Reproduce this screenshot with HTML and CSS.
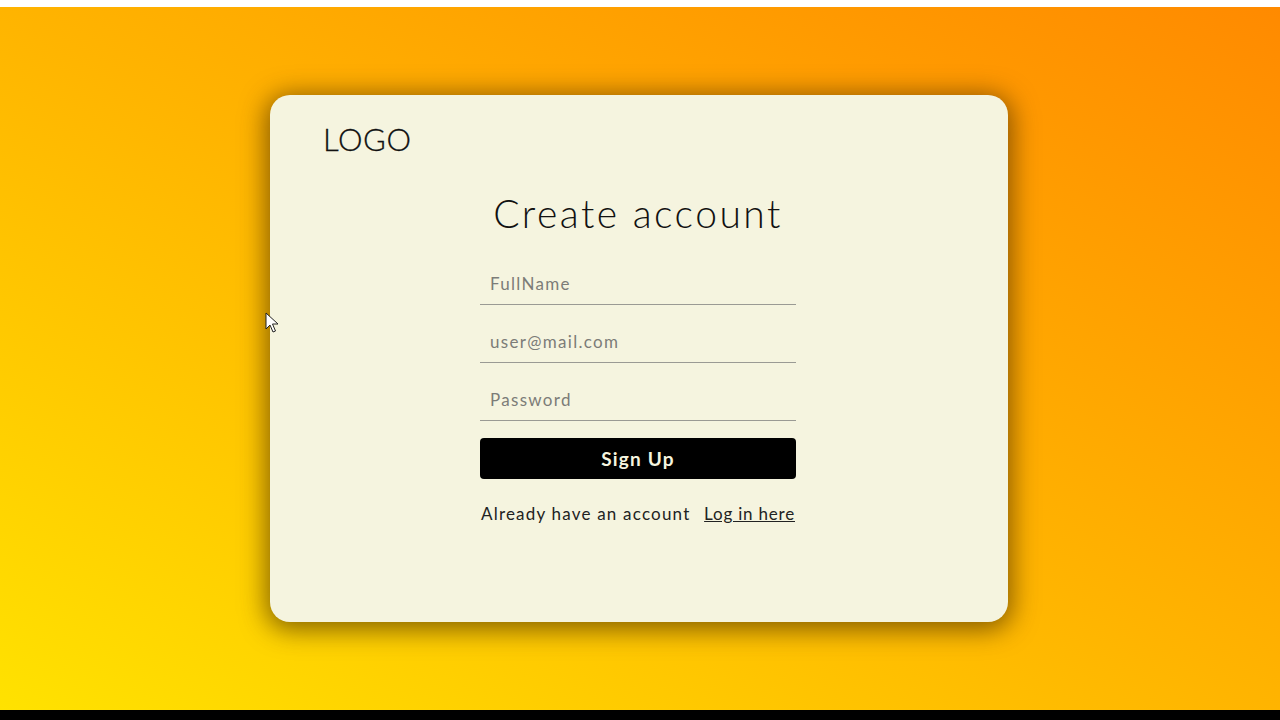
FILE: index.html
```html
<!DOCTYPE html>
<html lang="en">
<head>
<meta charset="utf-8">
<title>Create account</title>
<link rel="stylesheet" href="styles.css">
</head>
<body>
<div class="top-strip"></div>
<main class="stage">
  <section class="card">
    <div class="logo">LOGO</div>
    <form class="form">
      <h1 class="title">Create account</h1>
      <input class="field" type="text" placeholder="FullName">
      <input class="field" type="email" placeholder="user@mail.com">
      <input class="field" type="password" placeholder="Password">
      <button class="btn" type="button">Sign Up</button>
      <p class="alt"><span>Already have an account</span><a href="#" class="link">Log in here</a></p>
    </form>
  </section>
  <svg class="cursor" width="14" height="22" viewBox="0 0 14 22"><path d="M1 1 L1 17 L5 13 L8 20 L10.5 19 L7.5 12 L13 12 Z" fill="#fff" stroke="#222" stroke-width="1"/></svg>
</main>
<div class="bottom-strip"></div>
</body>
</html>
```
FILE: styles.css
```css
html, body { margin: 0; padding: 0; }
body {
  width: 1280px;
  height: 720px;
  overflow: hidden;
  font-family: "Lato", "Open Sans", sans-serif;
}
.top-strip { height: 7px; background: #ffffff; }
.bottom-strip { height: 10px; background: #000000; }
.stage {
  position: relative;
  height: 703px;
  display: flex;
  align-items: center;
  justify-content: center;
  background: linear-gradient(to top right, #ffe200 0%, #ffb400 50%, #ff8a00 100%);
}
.card {
  box-sizing: border-box;
  width: 738px;
  height: 527px;
  margin-left: -2px;
  border-radius: 20px;
  background: #f5f4df;
  box-shadow: 0 4px 26px 4px rgba(70, 45, 0, 0.65);
  padding: 22px 53px 0;
  display: flex;
  flex-direction: column;
}
.logo {
  font-size: 31px;
  line-height: 44px;
  font-weight: 300;
  color: #111;
  letter-spacing: 0.6px;
  -webkit-text-stroke: 0.3px #111;
}
.form {
  width: 316px;
  align-self: center;
  margin-left: -2px;
  display: flex;
  flex-direction: column;
}
.title {
  margin: 28px 0 26px;
  font-size: 39px;
  line-height: 48px;
  font-weight: 300;
  text-align: center;
  color: #111;
  letter-spacing: 2.5px;
}
.field {
  box-sizing: border-box;
  height: 42px;
  margin: 0 0 16px;
  padding: 0 10px;
  border: none;
  border-bottom: 1px solid #9a9a94;
  background: transparent;
  font-family: inherit;
  font-size: 17px;
  letter-spacing: 1.3px;
  color: #333;
  outline: none;
}
.field::placeholder { color: #7c7c78; }
.field:last-of-type { margin-bottom: 17px; }
.btn {
  height: 41px;
  border: none;
  border-radius: 4px;
  background: #000;
  color: #f5f4df;
  font-family: inherit;
  font-size: 19px;
  font-weight: 700;
  letter-spacing: 1.2px;
}
.alt {
  margin: 23px 0 0;
  font-size: 17px;
  line-height: 24px;
  letter-spacing: 1.2px;
  color: #222;
  display: flex;
  justify-content: space-between;
  padding: 0 1px;
}
.link { color: #222; text-decoration: underline; letter-spacing: 0.8px; }
.cursor { position: absolute; left: 265px; top: 305px; }
```
